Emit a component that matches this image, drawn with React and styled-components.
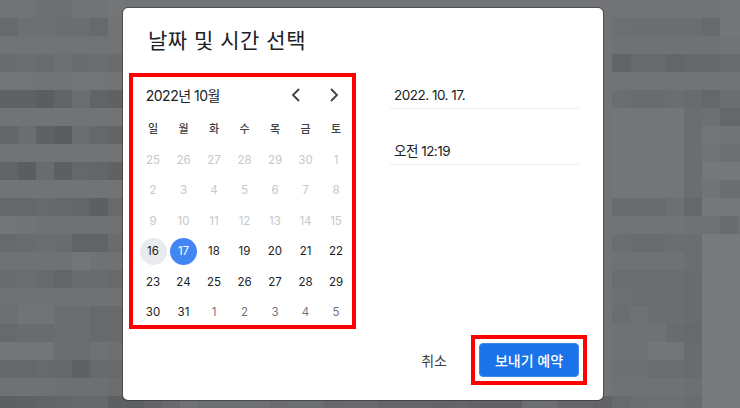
import React from 'react';
import styled, { createGlobalStyle } from 'styled-components';

const GlobalStyle = createGlobalStyle`
  html, body {
    margin: 0;
    padding: 0;
    background: #6e6f71;
  }
  body {
    font-family: Inter, "Noto Sans CJK KR", "Noto Sans", sans-serif;
    color: #202124;
  }
`;

// grey levels of the blurred page behind the dialog, 18px blocks
const leftGreys = [
  [114, 114, 110, 110, 114, 114, 116],
  [104, 110, 110, 108, 108, 104, 114],
  [113, 113, 113, 113, 113, 113, 113],
  [106, 108, 106, 110, 106, 108, 106],
  [115, 115, 114, 114, 115, 115, 114],
  [96, 96, 92, 98, 108, 98, 96],
  [114, 114, 114, 114, 114, 114, 114],
  [100, 108, 96, 92, 108, 102, 98],
  [114, 114, 114, 114, 114, 114, 114],
  [98, 92, 106, 94, 102, 100, 96],
  [114, 114, 114, 114, 114, 114, 114],
  [102, 102, 104, 102, 100, 94, 104],
  [116, 114, 112, 112, 112, 112, 112],
  [104, 106, 108, 106, 98, 98, 106],
  [112, 112, 112, 112, 116, 112, 112],
  [106, 108, 104, 100, 106, 106, 104],
  [112, 112, 112, 112, 112, 112, 112],
  [110, 114, 114, 108, 108, 104, 104],
  [104, 106, 106, 108, 108, 104, 104],
  [116, 116, 116, 108, 108, 112, 110],
  [102, 102, 104, 102, 96, 104, 104],
  [112, 112, 112, 110, 110, 110, 108],
  [94, 96, 98, 100, 102, 102, 94],
];

const rightGreys = [
  [114, 114, 114, 114, 114, 114, 116, 116],
  [110, 108, 108, 108, 108, 104, 116, 116],
  [112, 112, 112, 112, 112, 112, 114, 114],
  [98, 104, 104, 100, 102, 102, 106, 106],
  [114, 114, 114, 114, 114, 114, 114, 114],
  [108, 106, 106, 108, 106, 102, 108, 108],
  [116, 116, 116, 116, 108, 110, 102, 102],
  [116, 116, 116, 116, 108, 116, 114, 114],
  [116, 116, 116, 116, 108, 114, 110, 110],
  [116, 116, 116, 116, 108, 118, 118, 118],
  [116, 116, 116, 116, 108, 114, 108, 108],
  [106, 106, 106, 110, 102, 118, 118, 118],
  [114, 114, 114, 114, 112, 112, 106, 114],
  [108, 106, 106, 108, 108, 120, 120, 120],
  [112, 112, 112, 112, 108, 120, 120, 120],
  [108, 108, 108, 108, 106, 120, 120, 120],
  [110, 108, 108, 108, 106, 120, 120, 120],
  [108, 112, 108, 108, 106, 120, 120, 120],
  [112, 112, 112, 106, 104, 120, 120, 120],
  [112, 112, 116, 116, 106, 120, 120, 120],
  [110, 110, 108, 108, 106, 120, 120, 120],
  [112, 112, 112, 112, 110, 120, 120, 120],
  [104, 108, 110, 110, 106, 120, 120, 120],
];

// only the strip under the dialog's bottom edge shows of this row
const bottomStrip = [92, 98, 104, 112, 108, 108, 110, 110, 106, 108, 108, 102, 104, 104, 100, 100, 100, 98, 100, 98, 96, 96, 108, 108, 100, 100, 98];

const mosaic = leftGreys.flatMap((left, r) => {
  const middle = r === 22 ? bottomStrip : Array.from({ length: 27 }, () => 114);
  return [...left, ...middle, ...rightGreys[r]];
});

const weekdays = ['일', '월', '화', '수', '목', '금', '토'];

const days = [
  [25, 'faded'], [26, 'faded'], [27, 'faded'], [28, 'faded'], [29, 'faded'], [30, 'faded'], [1, 'faded'],
  [2, 'faded'], [3, 'faded'], [4, 'faded'], [5, 'faded'], [6, 'faded'], [7, 'faded'], [8, 'faded'],
  [9, 'faded'], [10, 'faded'], [11, 'faded'], [12, 'faded'], [13, 'faded'], [14, 'faded'], [15, 'faded'],
  [16, 'today'], [17, 'selected'], [18], [19], [20], [21], [22],
  [23], [24], [25], [26], [27], [28], [29],
  [30], [31], [1, 'next'], [2, 'next'], [3, 'next'], [4, 'next'], [5, 'next'],
];

const dayColors = {
  faded: '#c6c8ca',
  next: '#70757a',
  selected: '#ffffff',
  today: '#202124',
};

const Page = styled.div`
  position: relative;
  width: 740px;
  height: 408px;
  overflow: hidden;
  padding-top: 8px;
  padding-left: 123px;
  box-sizing: border-box;
`;

const Mosaic = styled.div`
  position: absolute;
  inset: 0;
  display: grid;
  grid-template-columns: repeat(42, 18px);
  grid-auto-rows: 18px;
`;

const Block = styled.div`
  background: rgb(${p => p.$g}, ${p => p.$g + 1}, ${p => p.$g + 3});
`;

const Dialog = styled.div`
  position: relative;
  width: 480px;
  height: 392px;
  box-sizing: border-box;
  background: #ffffff;
  border-radius: 5px;
  box-shadow: 0 0 0 1px rgba(45, 45, 48, 0.55);
  display: flex;
  flex-direction: column;
  padding: 18px 24px 0 6px;
`;

const Title = styled.h1`
  margin: 0 0 17px 19px;
  font-size: 21px;
  line-height: 30px;
  font-weight: 400;
  letter-spacing: 0.5px;
  color: #202124;
`;

const Body = styled.div`
  display: flex;
  align-items: flex-start;
  flex: 1;
`;

const CalendarFrame = styled.div`
  width: 227px;
  height: 256px;
  box-sizing: border-box;
  border: 4px solid #ff0000;
  padding: 0 4.75px;
`;

const MonthBar = styled.div`
  display: flex;
  align-items: center;
  height: 36px;
  margin-right: -6px;
  padding-left: 8px;
`;

const MonthLabel = styled.div`
  flex: 1;
  font-size: 14px;
  letter-spacing: -0.5px;
  color: #202124;
`;

const NavButton = styled.button`
  width: 38px;
  height: 36px;
  padding: 0;
  border: 0;
  background: none;
  display: flex;
  align-items: center;
  justify-content: center;
  color: #3c4043;
`;

const Grid = styled.div`
  display: grid;
  grid-template-columns: repeat(7, 30.5px);
  grid-template-rows: 30.5px repeat(6, 30.5px);
`;

const Weekday = styled.div`
  display: flex;
  align-items: center;
  justify-content: center;
  font-size: 11px;
  font-weight: 500;
  color: #3c4043;
`;

const Day = styled.div`
  display: flex;
  align-items: center;
  justify-content: center;
  align-self: center;
  justify-self: center;
  width: 27px;
  height: 27px;
  margin-top: 2px;
  border-radius: 50%;
  font-size: 11.5px;
  font-weight: 400;
  color: ${p => dayColors[p.$kind] || '#202124'};
  background: ${p => (p.$kind === 'selected' ? '#4285f4' : p.$kind === 'today' ? '#e8eaed' : 'transparent')};
`;

const Fields = styled.div`
  width: 190px;
  margin-left: 34px;
  margin-top: 11px;
  display: flex;
  flex-direction: column;
  gap: 31px;
`;

const Field = styled.div`
  height: 24px;
  padding-left: 4px;
  border-bottom: 1px solid #eceef1;
  font-size: 13.5px;
  line-height: 23px;
  letter-spacing: -0.5px;
  color: #202124;
`;

const Footer = styled.div`
  display: flex;
  align-items: center;
  justify-content: flex-end;
  height: 50px;
  margin-bottom: 15px;
  margin-right: -8px;
`;

const CancelButton = styled.button`
  border: 0;
  background: none;
  padding: 0;
  margin-right: 24px;
  font-family: inherit;
  font-size: 14px;
  color: #3c4043;
`;

const SendFrame = styled.div`
  box-sizing: border-box;
  width: 116px;
  height: 50px;
  border: 4px solid #ff0000;
  padding: 4px;
  display: flex;
`;

const SendButton = styled.button`
  flex: 1;
  border: 1px solid #3f86ee;
  border-radius: 4px;
  padding: 0;
  background: #1a73e8;
  color: #ffffff;
  font-family: inherit;
  font-size: 14px;
  font-weight: 500;
`;

const Chevron = ({ d }) => (
  <svg width="24" height="24" viewBox="0 0 24 24" fill="none" stroke="currentColor" strokeWidth="1.8">
    <path d={d} />
  </svg>
);

export default function App() {
  return (
    <>
      <GlobalStyle />
      <Page>
        <Mosaic>
          {mosaic.map((g, i) => (
            <Block key={i} $g={g} />
          ))}
        </Mosaic>
        <Dialog>
          <Title>날짜 및 시간 선택</Title>
          <Body>
            <CalendarFrame>
              <MonthBar>
                <MonthLabel>2022년 10월</MonthLabel>
                <NavButton><Chevron d="M15 6l-6 6 6 6" /></NavButton>
                <NavButton><Chevron d="M9 6l6 6-6 6" /></NavButton>
              </MonthBar>
              <Grid>
                {weekdays.map(w => (
                  <Weekday key={w}>{w}</Weekday>
                ))}
                {days.map(([n, kind], i) => (
                  <Day key={i} $kind={kind}>{n}</Day>
                ))}
              </Grid>
            </CalendarFrame>
            <Fields>
              <Field>2022. 10. 17.</Field>
              <Field>오전 12:19</Field>
            </Fields>
          </Body>
          <Footer>
            <CancelButton>취소</CancelButton>
            <SendFrame>
              <SendButton>보내기 예약</SendButton>
            </SendFrame>
          </Footer>
        </Dialog>
      </Page>
    </>
  );
}
